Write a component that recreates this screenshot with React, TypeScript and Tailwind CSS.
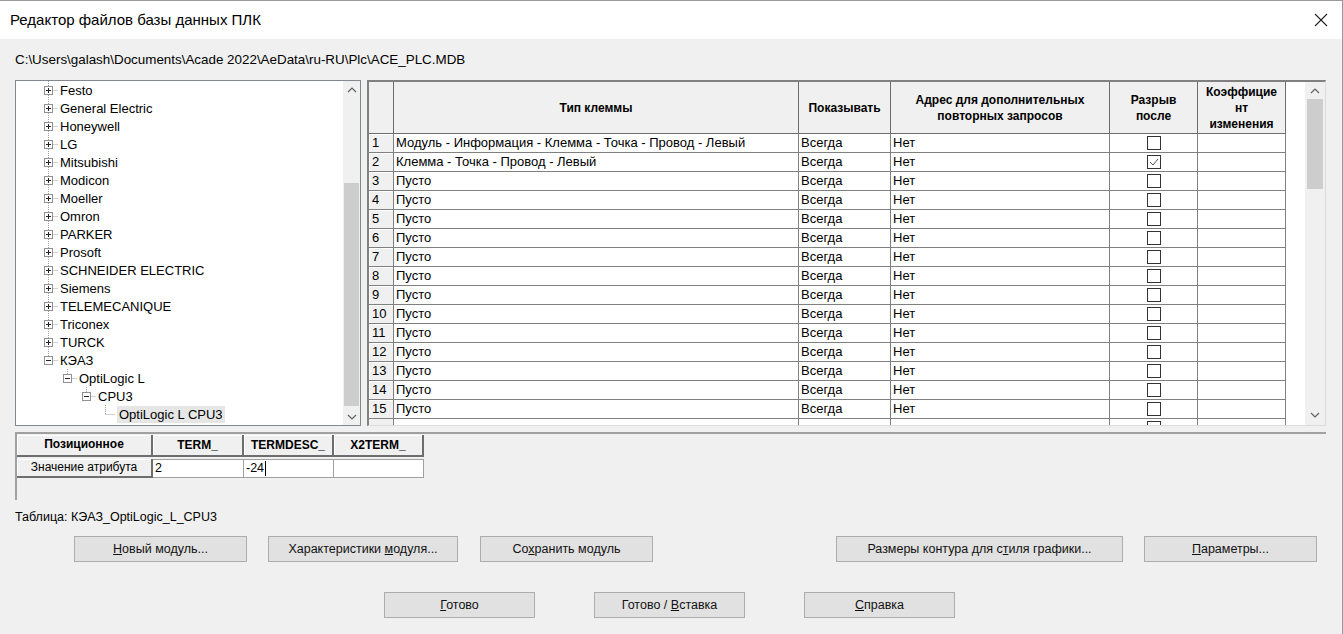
import React from "react"

const treeItems: { label: string; level: number; kind: "plus" | "minus" | "leaf"; last?: boolean; selected?: boolean }[] = [
  { label: "Festo", level: 0, kind: "plus" },
  { label: "General Electric", level: 0, kind: "plus" },
  { label: "Honeywell", level: 0, kind: "plus" },
  { label: "LG", level: 0, kind: "plus" },
  { label: "Mitsubishi", level: 0, kind: "plus" },
  { label: "Modicon", level: 0, kind: "plus" },
  { label: "Moeller", level: 0, kind: "plus" },
  { label: "Omron", level: 0, kind: "plus" },
  { label: "PARKER", level: 0, kind: "plus" },
  { label: "Prosoft", level: 0, kind: "plus" },
  { label: "SCHNEIDER ELECTRIC", level: 0, kind: "plus" },
  { label: "Siemens", level: 0, kind: "plus" },
  { label: "TELEMECANIQUE", level: 0, kind: "plus" },
  { label: "Triconex", level: 0, kind: "plus" },
  { label: "TURCK", level: 0, kind: "plus" },
  { label: "КЭАЗ", level: 0, kind: "minus", last: true },
  { label: "OptiLogic L", level: 1, kind: "minus", last: true },
  { label: "CPU3", level: 2, kind: "minus", last: true },
  { label: "OptiLogic L CPU3", level: 3, kind: "leaf", last: true, selected: true },
]

const padByLevel = ["pl-[23px]", "pl-[42px]", "pl-[61px]", "pl-[80px]"]

function TreeGlyph({ kind, last }: { kind: "plus" | "minus" | "leaf"; last?: boolean }) {
  return (
    <svg width="19" height="18" viewBox="0 0 19 18" className="shrink-0">
      <line x1="9.5" y1="0" x2="9.5" y2={last ? 9 : 18} stroke="#a0a0a0" strokeDasharray="1 1" />
      <line x1="9.5" y1="9.5" x2="19" y2="9.5" stroke="#a0a0a0" strokeDasharray="1 1" />
      {kind !== "leaf" && (
        <>
          <rect x="5.5" y="5.5" width="8" height="8" fill="#fff" stroke="#919191" />
          <line x1="7" y1="9.5" x2="12" y2="9.5" stroke="#222" />
          {kind === "plus" && <line x1="9.5" y1="7" x2="9.5" y2="12" stroke="#222" />}
        </>
      )}
    </svg>
  )
}

function Chevron({ up }: { up?: boolean }) {
  return (
    <svg width="10" height="6" viewBox="0 0 10 6">
      <polyline points={up ? "1,5 5,1 9,5" : "1,1 5,5 9,1"} fill="none" stroke="#606060" strokeWidth="1.2" />
    </svg>
  )
}

const rows = [
  "Модуль - Информация - Клемма - Точка - Провод - Левый",
  "Клемма - Точка - Провод - Левый",
  ...Array.from({ length: 13 }, () => "Пусто"),
]

function Checkbox({ checked }: { checked?: boolean }) {
  return (
    <div className="flex h-[14px] w-[14px] items-center justify-center border border-[#333] bg-white">
      {checked && (
        <svg width="12" height="12" viewBox="0 0 12 12">
          <polyline points="2,6 5,9 10,3" fill="none" stroke="#555" strokeWidth="1" />
        </svg>
      )}
    </div>
  )
}

function Btn({ w, children }: { w: string; children: React.ReactNode }) {
  return (
    <button
      className={`${w} flex h-[26px] shrink-0 items-center justify-center border border-[#adadad] bg-[#e1e1e1] text-[12.5px] text-[#111]`}
    >
      {children}
    </button>
  )
}

export default function App() {
  return (
    <div
      className="flex h-[634px] w-[1343px] flex-col overflow-hidden border-r border-t border-[#9a9a9a] bg-[#f0f0f0] text-black"
      style={{ fontFamily: "'Liberation Sans', Arial, sans-serif" }}
    >
      {/* Title bar */}
      <div className="flex h-[38px] shrink-0 items-center justify-between bg-white pl-[10px] pr-[14px]">
        <span className="text-[15px]">Редактор файлов базы данных ПЛК</span>
        <svg width="14" height="14" viewBox="0 0 14 14">
          <line x1="1" y1="1" x2="13" y2="13" stroke="#222" strokeWidth="1.1" />
          <line x1="13" y1="1" x2="1" y2="13" stroke="#222" strokeWidth="1.1" />
        </svg>
      </div>

      {/* Path */}
      <div className="h-[41px] shrink-0 pl-[15px] pt-[13px] text-[13.4px] leading-[16px]">
        C:\Users\galash\Documents\Acade 2022\AeData\ru-RU\Plc\ACE_PLC.MDB
      </div>

      {/* Main row */}
      <div className="flex h-[346px] shrink-0 pl-[15px]">
        {/* Tree */}
        <div className="flex w-[346px] border border-[#828790] bg-white">
          <div className="flex-1 overflow-hidden text-[13px]">
            {treeItems.map((it) => (
              <div key={it.label + it.level} className={`flex h-[18px] items-center ${padByLevel[it.level]}`}>
                <TreeGlyph kind={it.kind} last={it.last} />
                <span
                  className={`px-[2px] leading-[17px] ${it.selected ? "ml-[2px] bg-[#e6e6e6]" : ""}`}
                >
                  {it.label}
                </span>
              </div>
            ))}
          </div>
          <div className="flex w-[17px] flex-col items-center bg-[#f0f0f0]">
            <div className="flex h-[17px] items-center justify-center">
              <Chevron up />
            </div>
            <div className="flex w-full flex-1 flex-col pt-[85px] pb-[2px]">
              <div className="mx-auto w-[15px] flex-1 bg-[#cdcdcd]" />
            </div>
            <div className="flex h-[17px] items-center justify-center">
              <Chevron />
            </div>
          </div>
        </div>

        {/* Grid */}
        <div className="ml-[6px] flex w-[959px] border-l-2 border-t-2 border-b border-r border-[#808080] border-b-[#dcdcdc] border-r-[#dcdcdc] bg-white">
          <div className="flex-1 overflow-hidden text-[13px]">
            <div className="flex h-[52px] bg-[#f0f0f0] text-[12px] font-bold leading-[16px]">
              <div className="w-[25px] border-b border-r border-[#6d6d6d]" />
              <div className="flex w-[405px] items-center justify-center border-b border-r border-[#6d6d6d]">Тип клеммы</div>
              <div className="flex w-[92px] items-center justify-center border-b border-r border-[#6d6d6d]">Показывать</div>
              <div className="flex w-[219px] items-center justify-center border-b border-r border-[#6d6d6d] text-center">
                Адрес для дополнительных
                <br />
                повторных запросов
              </div>
              <div className="flex w-[88px] items-center justify-center border-b border-r border-[#6d6d6d] text-center">
                Разрыв
                <br />
                после
              </div>
              <div className="flex w-[88px] items-center justify-center border-b border-r border-[#6d6d6d] text-center">
                Коэффицие
                <br />
                нт
                <br />
                изменения
              </div>
              <div className="flex-1 bg-white" />
            </div>
            {rows.map((t, i) => (
              <div key={i} className="flex h-[19px] leading-[18px]">
                <div className="w-[25px] border-b border-r border-[#808080] bg-[#f0f0f0] pl-[3px] shadow-[inset_1px_1px_0_#fff]">
                  {i + 1}
                </div>
                <div className="w-[405px] truncate border-b border-r border-[#808080] pl-[2px]">{t}</div>
                <div className="w-[92px] border-b border-r border-[#808080] pl-[2px]">Всегда</div>
                <div className="w-[219px] border-b border-r border-[#808080] pl-[2px]">Нет</div>
                <div className="flex w-[88px] items-center justify-center border-b border-r border-[#808080]">
                  <Checkbox checked={i === 1} />
                </div>
                <div className="w-[88px] border-b border-r border-[#808080]" />
              </div>
            ))}
            <div className="flex h-[19px]">
              <div className="w-[25px] border-r border-[#808080] bg-[#f0f0f0]" />
              <div className="w-[405px] border-r border-[#808080]" />
              <div className="w-[92px] border-r border-[#808080]" />
              <div className="w-[219px] border-r border-[#808080]" />
              <div className="flex w-[88px] justify-center border-r border-[#808080] pt-[2px]">
                <Checkbox />
              </div>
              <div className="w-[88px] border-r border-[#808080]" />
            </div>
          </div>
          <div className="flex w-[20px] flex-col items-center bg-[#f0f0f0]">
            <div className="flex h-[17px] items-center justify-center">
              <Chevron up />
            </div>
            <div className="h-[90px] w-[16px] bg-[#cdcdcd]" />
            <div className="flex-1" />
            <div className="flex h-[20px] items-center justify-center">
              <Chevron />
            </div>
          </div>
        </div>
      </div>

      {/* Attribute panel */}
      <div className="ml-[15px] mt-[6px] h-[68px] w-[1311px] shrink-0 border-l-2 border-t-2 border-[#a0a0a0] pt-[1px]">
        <div className="flex h-[22px] text-[12px] font-bold">
          <div className="flex h-[22px] w-[136px] items-start justify-center border-b-2 border-r-2 border-[#6d6d6d] bg-[#f0f0f0] pt-[2px] leading-[14px] shadow-[inset_1px_1px_0_#fff]">
            Позиционное
          </div>
          <div className="flex w-[91px] items-center justify-center border-b-2 border-r-2 border-[#6d6d6d] bg-[#f0f0f0] shadow-[inset_1px_1px_0_#fff]">TERM_</div>
          <div className="flex w-[90px] items-center justify-center border-b-2 border-r-2 border-[#6d6d6d] bg-[#f0f0f0] shadow-[inset_1px_1px_0_#fff]">TERMDESC_</div>
          <div className="flex w-[90px] items-center justify-center border-b-2 border-r-2 border-[#6d6d6d] bg-[#f0f0f0] shadow-[inset_1px_1px_0_#fff]">X2TERM_</div>
        </div>
        <div className="mt-[2px] flex h-[19px] text-[12.5px] leading-[17px]">
          <div className="flex w-[136px] items-center justify-center border-b-2 border-r-2 border-[#6d6d6d] bg-[#f0f0f0] text-[12px] shadow-[inset_1px_1px_0_#fff]">
            Значение атрибута
          </div>
          <div className="w-[91px] border border-l-0 border-[#a0a0a0] bg-white pl-[2px]">2</div>
          <div className="flex w-[90px] border border-l-0 border-[#a0a0a0] bg-white pl-[2px]">
            -24<span className="ml-[1px] mt-[1px] h-[15px] w-px bg-black" />
          </div>
          <div className="w-[90px] border border-l-0 border-[#a0a0a0] bg-white" />
        </div>
      </div>

      {/* Table label */}
      <div className="flex h-[34px] shrink-0 items-center pl-[15px] text-[12.5px]">Таблица: КЭАЗ_OptiLogic_L_CPU3</div>

      {/* Buttons row 1 */}
      <div className="mt-[2px] flex h-[26px] shrink-0 pl-[74px]">
        <Btn w="w-[173px]">
          <span><u>Н</u>овый модуль...</span>
        </Btn>
        <div className="w-[21px]" />
        <Btn w="w-[190px]">
          <span>Характеристики <u>м</u>одуля...</span>
        </Btn>
        <div className="w-[22px]" />
        <Btn w="w-[173px]">
          <span>Со<u>х</u>ранить модуль</span>
        </Btn>
        <div className="w-[183px]" />
        <Btn w="w-[287px]">
          <span>Размеры контура для с<u>т</u>иля графики...</span>
        </Btn>
        <div className="w-[21px]" />
        <Btn w="w-[173px]">
          <span><u>П</u>араметры...</span>
        </Btn>
      </div>

      {/* Buttons row 2 */}
      <div className="mt-[30px] flex h-[26px] shrink-0 gap-[59px] pl-[384px]">
        <Btn w="w-[151px]">
          <span><u>Г</u>отово</span>
        </Btn>
        <Btn w="w-[151px]">
          <span>Готово / <u>В</u>ставка</span>
        </Btn>
        <Btn w="w-[151px]">
          <span><u>С</u>правка</span>
        </Btn>
      </div>
    </div>
  )
}
